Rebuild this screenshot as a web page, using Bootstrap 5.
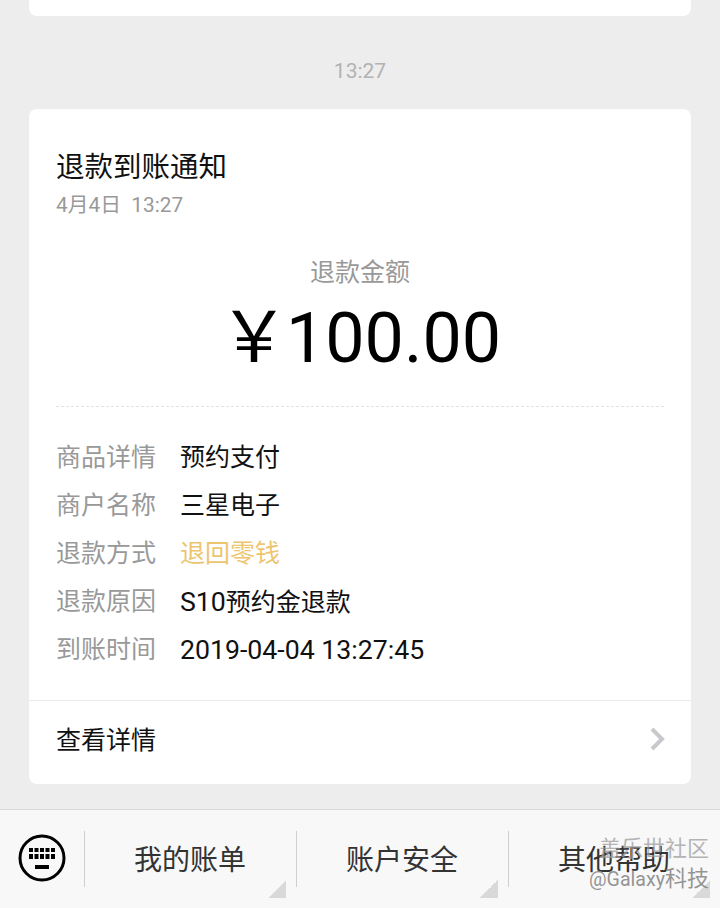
<!DOCTYPE html>
<html lang="zh">
<head>
  <meta charset="utf-8">
  <title>退款到账通知</title>
  <link rel="stylesheet" href="https://cdn.jsdelivr.net/npm/bootstrap@5.3.0/dist/css/bootstrap.min.css">
  <style>
    html, body { height: 908px; overflow: hidden; }
    body { background: #ededed; font-family: Roboto, "Noto Sans CJK SC", sans-serif; color: #111; }
    .chat-area { height: 809px; padding: 0 29px; overflow: hidden; }
    .msg-card { background: #fff; border-radius: 8px; }
    .prev-card { height: 16px; border-top-left-radius: 0; border-top-right-radius: 0; }
    .time-stamp { height: 93px; padding-top: 41px; font-size: 21px; line-height: 28px; color: #b2b2b2; text-align: center; }
    .notice-body { padding: 42px 27px 0; height: 591px; }
    .notice-title { font-size: 28.5px; line-height: 34px; }
    .notice-date { font-size: 20.8px; line-height: 28px; color: #999; margin-top: 6px; }
    .amount-label { font-size: 25px; line-height: 32px; color: #999; text-align: center; margin-top: 38px; }
    .amount-value { font-size: 70px; line-height: 80px; text-align: center; margin-top: 9px; color: #000; }
    .amount-value .yen { margin-right: -3px; }
    .dash-line { border-top: 1px dashed #e2e2e2; margin-top: 28px; }
    .detail-rows { margin-top: 27px; }
    .detail-row { height: 48px; font-size: 25px; line-height: 48px; }
    .detail-key { width: 124px; color: #999; }
    .latin-text { font-size: 26.7px; }
    .refund-way { color: #edc56f; }
    .detail-link { height: 84px; border-top: 1px solid #ebebeb; padding: 0 25px 3px 27px; font-size: 25px; }
    .bottom-bar { height: 99px; background: #f8f8f8; border-top: 1px solid #d9d9d9; position: relative; }
    .kb-slot { width: 84px; padding-bottom: 2px; }
    .menu-item { width: 212px; height: 56px; border-left: 1px solid #cfcfcf; padding: 4px 1px 0 0; font-size: 28px; color: #333; position: relative; flex: none; }
    .menu-item::after { content: ""; position: absolute; right: 10px; bottom: -11px; width: 18px; height: 18px; background: linear-gradient(135deg, transparent 50%, #d9d9d9 50%); }
    .water-mark { position: absolute; right: 11px; top: 24px; text-align: right; color: #6f6f6f; opacity: .72; font-size: 22px; line-height: 30px; text-shadow: 0 0 1px #fff; }
    .water-mark .wm-top { color: #999; }
    .water-mark .wm-latin { font-size: 19.6px; }
  </style>
</head>
<body>
  <div class="chat-area">
    <div class="msg-card prev-card"></div>
    <div class="time-stamp">13:27</div>
    <div class="msg-card">
      <div class="notice-body">
        <div class="notice-title">退款到账通知</div>
        <div class="notice-date">4月4日&nbsp;&nbsp;13:27</div>
        <div class="amount-label">退款金额</div>
        <div class="amount-value"><span class="yen">￥</span>100.00</div>
        <div class="dash-line"></div>
        <div class="detail-rows">
          <div class="d-flex detail-row"><div class="detail-key">商品详情</div><div>预约支付</div></div>
          <div class="d-flex detail-row"><div class="detail-key">商户名称</div><div>三星电子</div></div>
          <div class="d-flex detail-row"><div class="detail-key">退款方式</div><div class="refund-way">退回零钱</div></div>
          <div class="d-flex detail-row"><div class="detail-key">退款原因</div><div><span class="latin-text">S10</span>预约金退款</div></div>
          <div class="d-flex detail-row"><div class="detail-key">到账时间</div><div class="latin-text">2019-04-04 13:27:45</div></div>
        </div>
      </div>
      <div class="detail-link d-flex align-items-center justify-content-between">
        <span>查看详情</span>
        <svg class="mb-1" width="16" height="24" viewBox="0 0 16 24" fill="none" stroke="#c8c8cd" stroke-width="4"><path d="M2 2l10 10L2 22"/></svg>
      </div>
    </div>
  </div>
  <div class="bottom-bar d-flex align-items-center">
    <div class="kb-slot d-flex justify-content-center">
      <svg width="48" height="48" viewBox="0 0 48 48">
        <circle cx="24" cy="24" r="22" fill="none" stroke="#000" stroke-width="3"/>
        <g fill="#000">
          <rect x="11" y="14" width="4" height="4"/><rect x="16.5" y="14" width="4" height="4"/><rect x="22" y="14" width="4" height="4"/><rect x="27.5" y="14" width="4" height="4"/><rect x="33" y="14" width="4" height="4"/>
          <rect x="11" y="20" width="4" height="5"/><rect x="16.5" y="20" width="4" height="5"/><rect x="22" y="20" width="4" height="5"/><rect x="27.5" y="20" width="4" height="5"/><rect x="33" y="20" width="4" height="5"/>
          <rect x="17" y="31" width="14" height="4"/>
        </g>
      </svg>
    </div>
    <div class="menu-item d-flex align-items-center justify-content-center">我的账单</div>
    <div class="menu-item d-flex align-items-center justify-content-center">账户安全</div>
    <div class="menu-item d-flex align-items-center justify-content-center">其他帮助</div>
    <div class="water-mark"><div class="wm-top">盖乐世社区</div><div><span class="wm-latin">@Galaxy</span>科技</div></div>
  </div>
</body>
</html>
